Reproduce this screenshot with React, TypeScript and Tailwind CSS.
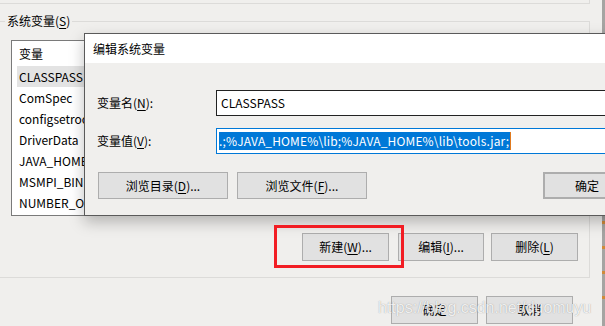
import React from "react";

const font = { fontFamily: '"Noto Sans CJK SC", "Noto Sans", sans-serif' };

function Btn({ children, className = "" }: { children: React.ReactNode; className?: string }) {
  return (
    <div
      className={
        "flex items-center justify-center bg-[#e1e1e1] border border-[#adadad] text-[12px] text-black " +
        className
      }
    >
      {children}
    </div>
  );
}

const rows = ["CLASSPASS", "ComSpec", "configsetroot", "DriverData", "JAVA_HOME", "MSMPI_BIN", "NUMBER_OF_PROCESSORS"];

export default function App() {
  return (
    <div
      className="relative w-[605px] h-[326px] overflow-hidden bg-[#f0efed] text-black text-[12px] leading-none flex"
      style={font}
    >
      {/* main window content */}
      <div className="w-[602px] flex flex-col">
        {/* bottom of previous group box */}
        <div className="h-[4px] w-[590px] border-b border-r border-[#dcdbd9]" />
        {/* system variables group box */}
        <div className="relative mt-[17px] w-[590px] h-[257px] border-t border-r border-b border-[#dcdbd9] flex flex-col">
          <div className="absolute left-[5px] top-[-8px] px-[2px] bg-[#f0efed] leading-[14px]">
            系统变量(<span className="underline underline-offset-2">S</span>)
          </div>
          {/* list */}
          <div className="ml-[11px] mt-[18px] w-[300px] h-[176px] border border-[#7a7a7a] bg-white flex flex-col overflow-hidden">
            <div className="h-[25px] shrink-0 flex items-center pl-[7px]">变量</div>
            {rows.map((r, i) => (
              <div
                key={r}
                className={
                  "h-[21px] shrink-0 ml-[5px] pl-[2px] flex items-center whitespace-nowrap " +
                  (i === 0 ? "bg-[#e3e3e3]" : "")
                }
              >
                {r}
              </div>
            ))}
          </div>
          {/* buttons */}
          <div className="mt-[17px] flex pl-[302px]">
            <Btn className="w-[87px] h-[28px]">
              新建(<span className="underline underline-offset-2">W</span>)...
            </Btn>
            <Btn className="ml-[9px] w-[86px] h-[28px]">
              编辑(<span className="underline underline-offset-2">I</span>)...
            </Btn>
            <Btn className="ml-[7px] w-[87px] h-[28px]">
              删除(<span className="underline underline-offset-2">L</span>)
            </Btn>
          </div>
        </div>
        {/* bottom buttons */}
        <div className="mt-[18px] flex pl-[391px]">
          <Btn className="w-[87px] h-[28px]">确定</Btn>
          <Btn className="ml-[8px] w-[87px] h-[28px]">取消</Btn>
        </div>
      </div>

      {/* right window edge */}
      <div className="w-[3px] h-full bg-[#a5a4a2] flex flex-col items-center pt-[221px] gap-[22px]">
        <div className="w-[3px] h-[3px] bg-[#d08a3a]" />
        <div className="w-[3px] h-[3px] bg-[#d08a3a]" />
        <div className="w-[3px] h-[3px] bg-[#d08a3a]" />
        <div className="w-[3px] h-[3px] bg-[#d08a3a]" />
      </div>

      {/* edit dialog */}
      <div className="absolute left-[84px] top-[33px] w-[600px] h-[183px] border border-[#5a5a5a] bg-[#f0efed] shadow-[0_6px_14px_rgba(0,0,0,0.25)] flex flex-col">
        <div className="h-[29px] bg-white flex items-center pl-[8px] shrink-0">编辑系统变量</div>
        <div className="flex flex-col pt-[27px]">
          <div className="flex items-center h-[26px]">
            <div className="w-[131px] pl-[12px]">
              变量名(<span className="underline underline-offset-2">N</span>):
            </div>
            <div className="w-[420px] h-[26px] border border-[#222] bg-white flex items-center pl-[4px]">
              CLASSPASS
            </div>
          </div>
          <div className="flex items-center h-[26px] mt-[12px]">
            <div className="w-[131px] pl-[12px]">
              变量值(<span className="underline underline-offset-2">V</span>):
            </div>
            <div className="w-[420px] h-[26px] border border-[#0078d7] bg-white flex items-center pl-[2px]">
              <span className="bg-[#0078d7] text-white h-[18px] flex items-center whitespace-nowrap pr-[1px] tracking-[0.15px]">
                .;%JAVA_HOME%\lib;%JAVA_HOME%\lib\tools.jar;
              </span>
              <span className="w-[1px] h-[18px] bg-[#e07a1f]" />
            </div>
          </div>
          <div className="flex mt-[18px] pl-[13px]">
            <Btn className="w-[130px] h-[27px]">
              浏览目录(<span className="underline underline-offset-2">D</span>)...
            </Btn>
            <Btn className="ml-[9px] w-[130px] h-[27px]">
              浏览文件(<span className="underline underline-offset-2">F</span>)...
            </Btn>
            <Btn className="ml-[176px] w-[88px] h-[27px] border-2 border-[#0078d7]">确定</Btn>
          </div>
        </div>
      </div>

      {/* red highlight */}
      <div className="absolute left-[274px] top-[225px] w-[130px] h-[43px] border-[3px] border-[#f21d24]" />

      {/* watermark */}
      <div
        className="absolute left-[378px] top-[298px] text-[16px] leading-[20px] text-[rgba(255,255,255,0.85)] whitespace-nowrap [text-shadow:0_0_1px_rgba(110,110,110,0.7)]"
        style={{ fontFamily: '"Liberation Sans", Arial, sans-serif' }}
      >
        https://blog.csdn.net/duomuyu
      </div>
    </div>
  );
}
